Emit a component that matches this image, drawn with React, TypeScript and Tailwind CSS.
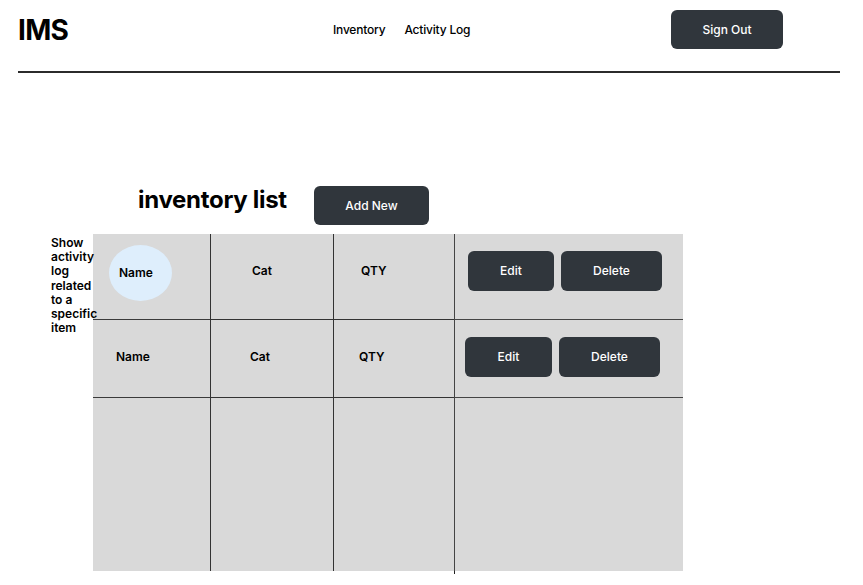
import React from 'react';

const font = { fontFamily: 'Inter, "Noto Sans", sans-serif' };

const DarkButton: React.FC<{ label: string; className?: string }> = ({ label, className = '' }) => (
  <button
    className={`flex items-center justify-center rounded-md bg-[#30363c] text-[12px] font-medium text-white ${className}`}
  >
    {label}
  </button>
);

const App: React.FC = () => {
  return (
    <div className="h-[585px] w-[863px] overflow-hidden bg-white text-black" style={font}>
      {/* header */}
      <header className="px-[18px] pt-[10px]">
        <div className="grid h-[39px] grid-cols-[315px_338px_auto] items-center">
          <div className="text-[28px] font-bold leading-none tracking-tight">IMS</div>
          <nav className="flex items-center gap-[19px] text-[12px] font-medium tracking-[-0.2px]">
            <span>Inventory</span>
            <span>Activity Log</span>
          </nav>
          <DarkButton label="Sign Out" className="h-[39px] w-[112px]" />
        </div>
        <div className="mt-[22px] h-[2px] w-[822px] bg-[#2b2b2b]" />
      </header>

      {/* title row */}
      <div className="mt-[111px] flex items-start pl-[138px]">
        <h1 className="w-[149px] whitespace-nowrap text-[24px] font-bold leading-[32px] tracking-[-0.3px]">
          inventory list
        </h1>
        <DarkButton label="Add New" className="ml-[27px] mt-[2px] h-[39px] w-[115px]" />
      </div>

      {/* note + table */}
      <div className="mt-[9px] flex items-start">
        <p className="relative z-10 ml-[51px] mt-[2px] w-[42px] text-[12px] font-semibold leading-[14.2px]">
          Show activity log related to a specific item
        </p>
        <div className="grid h-[337px] w-[590px] grid-cols-[117px_123px_121px_229px] grid-rows-[85px_78px_174px] bg-[#d9d9d9] text-[12px] font-semibold">
          {/* row 1 */}
          <div className="flex items-start pl-[16px] pt-[11px]">
            <div className="flex h-[56px] w-[63px] items-center rounded-[50%] bg-[#deeefc] pl-[10px]">Name</div>
          </div>
          <div className="flex items-center border-l border-[#333] pb-[11px] pl-[41px]">Cat</div>
          <div className="flex items-center border-l border-[#333] pb-[11px] pl-[27px]">QTY</div>
          <div className="flex items-center gap-[7px] border-l border-[#444] pb-[11px] pl-[13px]">
            <DarkButton label="Edit" className="h-[40px] w-[86px]" />
            <DarkButton label="Delete" className="h-[40px] w-[101px]" />
          </div>

          {/* row 2 */}
          <div className="flex items-center border-t border-[#3a3a3a] pb-[3px] pl-[23px]">Name</div>
          <div className="flex items-center border-l border-t border-[#333] pb-[3px] pl-[39px]">Cat</div>
          <div className="flex items-center border-l border-t border-[#333] pb-[3px] pl-[25px]">QTY</div>
          <div className="flex items-center gap-[7px] border-l border-t border-[#444] pb-[3px] pl-[10px]">
            <DarkButton label="Edit" className="h-[40px] w-[87px]" />
            <DarkButton label="Delete" className="h-[40px] w-[101px]" />
          </div>

          {/* row 3 */}
          <div className="border-t border-[#3a3a3a]" />
          <div className="border-l border-t border-[#333]" />
          <div className="border-l border-t border-[#333]" />
          <div className="relative border-l border-t border-[#444]">
            <span className="absolute -left-px bottom-[-3px] h-[3px] w-px bg-[#222]" />
          </div>
        </div>
      </div>
    </div>
  );
};

export default App;
